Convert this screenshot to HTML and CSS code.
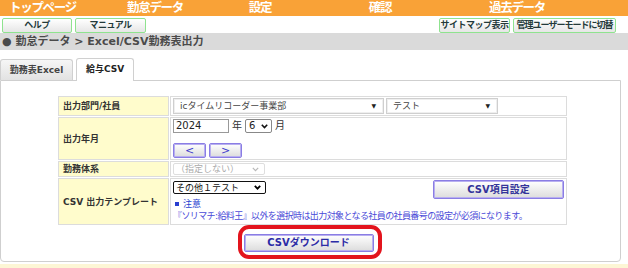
FILE: index.html
```html
<!DOCTYPE html>
<html lang="ja">
<head>
  <meta charset="UTF-8" />
  <title>Excel/CSV勤務表出力</title>
  <link rel="stylesheet" href="styles.css">
</head>
<body>
  <div class="nav">
    <span>トップページ</span>
    <span>勤怠データ</span>
    <span>設定</span>
    <span>確認</span>
    <span>過去データ</span>
  </div>

  <div class="tools">
    <div class="tools-left">
      <button class="gbtn w70">ヘルプ</button>
      <button class="gbtn w71">マニュアル</button>
    </div>
    <div class="tools-right">
      <button class="gbtn w71">サイトマップ表示</button>
      <button class="gbtn w103 tight">管理ユーザーモードに切替</button>
    </div>
  </div>

  <div class="crumb">● 勤怠データ &gt; Excel/CSV勤務表出力</div>

  <div class="tabs">
    <div class="tab">勤務表Excel</div>
    <div class="tab active">給与CSV</div>
  </div>

  <div class="panel">
    <div class="form">
      <div class="label">出力部門/社員</div>
      <div class="value">
        <div class="line">
          <div class="sel w211"><span>icタイムリコーダー事業部</span><span class="tri">▼</span></div>
          <div class="sel w112"><span>テスト</span><span class="tri">▼</span></div>
        </div>
      </div>

      <div class="label">出力年月</div>
      <div class="value">
        <div class="line ym">
          <div class="year">2024</div>
          <span class="unit">年</span>
          <div class="month">
            <span>6</span>
            <svg class="chev" width="7" height="5" viewBox="0 0 7 5"><path d="M0.8 0.8 L3.5 3.6 L6.2 0.8" stroke="#111" stroke-width="1.6" fill="none"/></svg>
          </div>
          <span class="unit">月</span>
        </div>
        <div class="line arrows">
          <button class="pbtn">&lt;</button>
          <button class="pbtn">&gt;</button>
        </div>
      </div>

      <div class="label">勤務体系</div>
      <div class="value slim">
        <div class="disabled">
          <span>（指定しない）</span>
          <svg class="chev" width="7" height="5" viewBox="0 0 7 5"><path d="M0.8 0.8 L3.5 3.6 L6.2 0.8" stroke="#b8b8b8" stroke-width="1.2" fill="none"/></svg>
        </div>
      </div>

      <div class="label">CSV 出力テンプレート</div>
      <div class="value">
        <div class="line top">
          <div class="tmpl">
            <span>その他１テスト</span>
            <svg class="chev" width="7" height="5" viewBox="0 0 7 5"><path d="M0.8 0.8 L3.5 3.6 L6.2 0.8" stroke="#000" stroke-width="1.8" fill="none"/></svg>
          </div>
          <button class="pbtn big">CSV項目設定</button>
        </div>
        <div class="note-head"><span class="sq"></span>注意</div>
        <div class="note">『ソリマチ:給料王』以外を選択時は出力対象となる社員の社員番号の設定が必須になります。</div>
      </div>
    </div>

    <div class="download">
      <div class="mark">
        <button class="pbtn dl">CSVダウンロード</button>
      </div>
    </div>
  </div>

  <div class="foot"></div>
</body>
</html>
```

FILE: styles.css
```css
body {
  margin: 0;
  font-family: "DejaVu Sans", "Noto Sans CJK JP", sans-serif;
  background: white;
  color: #333;
}

button {
  font-family: inherit;
  padding: 0;
  margin: 0;
  cursor: pointer;
}

/* top menu */
.nav {
  display: grid;
  grid-template-columns: 85px 140px 70px 170px 104px;
  height: 16px;
  overflow: hidden;
  background: #f9a237;
}

.nav span {
  text-align: center;
  color: white;
  font-weight: bold;
  font-size: 12.5px;
  line-height: 16px;
  letter-spacing: -1.3px;
}

/* help buttons */
.tools {
  display: flex;
  justify-content: space-between;
  height: 17px;
  box-sizing: border-box;
  padding: 2px 12px 0 2px;
}

.tools-left, .tools-right {
  display: flex;
  gap: 3px;
}

.gbtn {
  height: 15px;
  border: 1px solid #8fe38f;
  border-radius: 2px;
  background: linear-gradient(#ffffff, #e6e6e6);
  color: #243a3a;
  font-size: 9px;
  font-weight: bold;
  line-height: 13px;
  letter-spacing: -0.5px;
}

.w70 { width: 70px; }
.w71 { width: 71px; }
.w103 { width: 103px; }
.tight { letter-spacing: -1px; }

.crumb {
  height: 17px;
  padding-left: 2px;
  background: #dadada;
  color: #4a4a4a;
  font-size: 11px;
  font-weight: bold;
  line-height: 17px;
  overflow: hidden;
}

/* tabs */
.tabs {
  display: flex;
  align-items: flex-end;
  gap: 3px;
  margin-top: 8px;
  height: 22px;
}

.tab {
  width: 73px;
  height: 21px;
  box-sizing: border-box;
  border: 1px solid #d0d0d0;
  border-bottom: none;
  border-radius: 3px 3px 0 0;
  background: linear-gradient(#f6f6f6, #e2e2e2);
  color: #444;
  font-size: 9px;
  font-weight: bold;
  line-height: 20px;
  text-align: center;
}

.tab.active {
  width: 58px;
  height: 23px;
  margin-bottom: -1px;
  background: white;
  color: #222;
  position: relative;
}

.panel {
  width: 621px;
  box-sizing: border-box;
  border: 1px solid #cfcfcf;
  border-radius: 0 0 4px 4px;
  padding: 15px 0 2px 0;
}

/* form grid */
.form {
  display: grid;
  grid-template-columns: 111px 397px;
  grid-template-rows: 20px 43px 16px 47px;
  gap: 1px;
  margin-left: 57px;
  font-size: 9px;
  line-height: 12px;
}

.label, .value {
  box-sizing: border-box;
  border: 1px solid #dcdcdc;
  padding: 1px 2px;
  overflow: hidden;
}

.label {
  display: flex;
  align-items: center;
  padding-left: 4px;
  background: #fffccc;
  color: #333;
  font-weight: bold;
}

.value {
  background: white;
}

.value.slim {
  padding-top: 0;
  padding-bottom: 0;
}

.line {
  display: flex;
  align-items: center;
  gap: 2px;
}

.sel {
  display: flex;
  justify-content: space-between;
  align-items: center;
  height: 16px;
  box-sizing: border-box;
  border: 1px solid #cfcfcf;
  box-shadow: inset 0 0 0 1px #efefef;
  padding: 0 7px 0 6px;
  color: #444;
}

.w211 { width: 211px; }
.w112 { width: 112px; }

.tri {
  font-size: 6px;
  color: #222;
}

.ym {
  height: 14px;
}

.year {
  width: 56px;
  height: 14px;
  box-sizing: border-box;
  border: 1px solid #999;
  padding-left: 2px;
  font-size: 10px;
  line-height: 12px;
  color: #222;
}

.unit {
  font-size: 10px;
  color: #333;
  margin: 0 1px;
}

.month {
  display: flex;
  justify-content: space-between;
  align-items: center;
  width: 27px;
  height: 14px;
  box-sizing: border-box;
  border: 1px solid #888;
  border-radius: 2px;
  padding: 0 3px;
  font-size: 10px;
  line-height: 12px;
  color: #222;
}

.chev {
  display: block;
  flex: none;
}

.arrows {
  margin-top: 10px;
  gap: 3px;
  height: 15px;
}

.pbtn {
  width: 33px;
  height: 15px;
  border: 1px solid #8a7de4;
  box-shadow: inset 0 0 0 1px #b8aff0;
  border-radius: 2px;
  background: linear-gradient(#ffffff, #dcdcdc);
  color: #3c3ccc;
  font-size: 11px;
  line-height: 12px;
}

.disabled {
  display: flex;
  justify-content: space-between;
  align-items: center;
  width: 92px;
  height: 12px;
  margin-top: 1px;
  box-sizing: border-box;
  border: 1px solid #dedede;
  border-radius: 2px;
  padding: 0 5px 0 2px;
  color: #aaa;
  line-height: 10px;
}

.top {
  justify-content: space-between;
  align-items: flex-start;
  height: 19px;
}

.tmpl {
  display: flex;
  justify-content: space-between;
  align-items: center;
  width: 93px;
  height: 13px;
  margin-top: 1px;
  box-sizing: border-box;
  border: 1.5px solid #111;
  border-radius: 2px;
  padding: 0 4px 0 2px;
  color: #111;
  line-height: 10px;
}

.pbtn.big {
  width: 131px;
  height: 19px;
  color: #33339a;
  font-size: 10px;
  font-weight: bold;
}

.note-head {
  display: flex;
  align-items: center;
  gap: 4px;
  height: 12px;
  margin-top: -1px;
  color: #2a3fd0;
}

.sq {
  width: 4px;
  height: 4px;
  margin-left: 2px;
  background: #2a3fd0;
}

.note {
  height: 12px;
  color: #4a4ad8;
  letter-spacing: -0.6px;
  white-space: nowrap;
}

.download {
  display: flex;
  justify-content: center;
  padding-right: 2px;
}

.mark {
  display: flex;
  padding: 5px 4px 3px 2px;
  border: 4px solid #e3141d;
  border-radius: 11px;
}

.pbtn.dl {
  width: 130px;
  height: 18px;
  color: #2c2ca6;
  font-size: 10px;
  font-weight: bold;
  line-height: 16px;
}

.foot {
  margin-top: 2px;
  height: 10px;
  background: #fdf6d5;
}
```
